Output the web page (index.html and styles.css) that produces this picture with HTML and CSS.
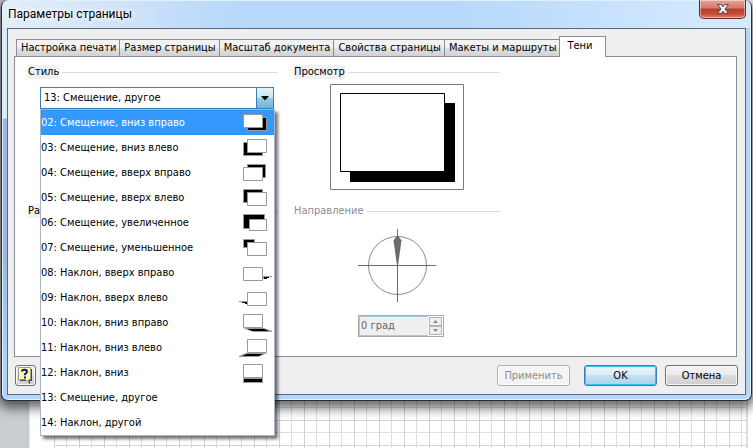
FILE: index.html
```html
<!DOCTYPE html>
<html lang="ru">
<head>
<meta charset="utf-8">
<title>Параметры страницы</title>
<link rel="stylesheet" href="styles.css">
</head>
<body>
<main class="dialog">
  <header class="titlebar">
    <h1 class="title">Параметры страницы</h1>
    <button class="close" type="button" aria-label="Закрыть">
      <svg width="14" height="12" viewBox="0 0 14 12"><path d="M1.5 1.5h3.6L7 3.8l1.9-2.3h3.6L9 6l3.5 4.5H8.9L7 8.2l-1.9 2.3H1.5L5 6z" fill="#f4f4f4" stroke="#4b4a55"/></svg>
    </button>
  </header>
  <div class="client">
    <nav class="tabs" role="tablist">
      <button class="tab" type="button" role="tab">Настройка печати</button>
      <button class="tab" type="button" role="tab">Размер страницы</button>
      <button class="tab" type="button" role="tab">Масштаб документа</button>
      <button class="tab" type="button" role="tab">Свойства страницы</button>
      <button class="tab" type="button" role="tab">Макеты и маршруты</button>
      <button class="tab tab-active" type="button" role="tab" aria-selected="true">Тени</button>
    </nav>
    <section class="panel">
      <div class="group">
        <div class="legend"><label class="legend-text" for="style">Стиль</label></div>
        <div class="combo">
          <select class="combo-select" id="style"><option>13: Смещение, другое</option></select>
          <span class="combo-arrow"><svg width="8" height="5" viewBox="0 0 8 5"><path d="M0 0h8L4 4.5z"/></svg></span>
          <ul class="menu" role="listbox" aria-labelledby="style">
            <li class="item item-selected" role="option" aria-selected="true">02: Смещение, вниз вправо
              <svg class="icon" viewBox="0 0 36 25"><path class="shade" d="M9.5 7.5h19v13h-19z"/><path class="sheet" d="M5.5 4.5h19v13h-19z"/></svg></li>
            <li class="item" role="option">03: Смещение, вниз влево
              <svg class="icon" viewBox="0 0 36 25"><path class="shade" d="M5.5 7.5h19v13h-19z"/><path class="sheet" d="M9.5 4.5h19v13h-19z"/></svg></li>
            <li class="item" role="option">04: Смещение, вверх вправо
              <svg class="icon" viewBox="0 0 36 25"><path class="shade" d="M9.5 4.5h18v13h-18z"/><path class="sheet" d="M5.5 7.5h19v13h-19z"/></svg></li>
            <li class="item" role="option">05: Смещение, вверх влево
              <svg class="icon" viewBox="0 0 36 25"><path class="shade" d="M5.5 4.5h19v13h-19z"/><path class="sheet" d="M9.5 7.5h19v13h-19z"/></svg></li>
            <li class="item" role="option">06: Смещение, увеличенное
              <svg class="icon" viewBox="0 0 36 25"><path class="shade" d="M5.5 4.5h21v14h-21z"/><path class="sheet" d="M11.5 9.5h17v11h-17z"/></svg></li>
            <li class="item" role="option">07: Смещение, уменьшенное
              <svg class="icon" viewBox="0 0 36 25"><path class="shade" d="M5.5 4.5h11v8h-11z"/><path class="sheet" d="M9.5 7.5h19v13h-19z"/></svg></li>
            <li class="item" role="option">08: Наклон, вверх вправо
              <svg class="icon" viewBox="0 0 36 25"><path d="M25 16h9v1h-3v1h-3v1h-3z" fill="#999"/><path d="M26 17h5v1h-2v1h-3z"/><path class="sheet" d="M5.5 7.5h19v13h-19z"/></svg></li>
            <li class="item" role="option">09: Наклон, вверх влево
              <svg class="icon" viewBox="0 0 36 25"><path d="M1 16h8v3H7v-1H4v-1H1z" fill="#999"/><path d="M4 17h5v2H7v-1H4z"/><path class="sheet" d="M9.5 7.5h19v13h-19z"/></svg></li>
            <li class="item" role="option">10: Наклон, вниз вправо
              <svg class="icon" viewBox="0 0 36 25"><path d="M5 18h21l8 3v1H16z" fill="#999"/><path d="M9 19h17l5 2H14z"/><path class="sheet" d="M5.5 4.5h19v13h-19z"/></svg></li>
            <li class="item" role="option">11: Наклон, вниз влево
              <svg class="icon" viewBox="0 0 36 25"><path d="M29 18H8l-7 3v1h19z" fill="#999"/><path d="M25 19H9l-5 2h17z"/><path class="sheet" d="M9.5 4.5h19v13h-19z"/></svg></li>
            <li class="item" role="option">12: Наклон, вниз
              <svg class="icon" viewBox="0 0 36 25"><path d="M5 17h20v6H5z" fill="#999"/><path d="M6 19h18v3H6z"/><path class="sheet" d="M5.5 4.5h19v13h-19z"/></svg></li>
            <li class="item" role="option">13: Смещение, другое</li>
            <li class="item" role="option">14: Наклон, другой</li>
          </ul>
        </div>
      </div>
      <div class="group">
        <div class="legend"><span class="legend-text">Просмотр</span></div>
        <svg class="preview" width="134" height="106" viewBox="0 0 134 106">
          <path d="M.5.5h133v105H.5z" fill="#fff" stroke="#7b7b7b"/>
          <path d="M20 19h105v79H20z"/>
          <path d="M10.5 9.5h104v78h-104z" fill="#fff" stroke="#000"/>
        </svg>
      </div>
      <div class="group">
        <div class="legend"><span class="legend-text">Ра</span></div>
      </div>
      <div class="group group-disabled">
        <div class="legend"><label class="legend-text" for="angle">Направление</label></div>
        <svg class="compass" width="78" height="73" viewBox="0 0 78 73">
          <circle cx="39.5" cy="36.5" r="29" fill="none" stroke="#8a8a8a"/>
          <path d="M39.5 0v73M0 36.5h78" stroke="#6c6c6c"/>
          <path d="M39.5 6l-4 5.5 3.5 25h1l3.5-25z" fill="#6c6c6c"/>
        </svg>
        <div class="spinner">
          <input class="spinner-input" id="angle" type="text" value="0 град" disabled>
          <div class="spinner-buttons">
            <button class="step" type="button" disabled aria-label="Больше"><svg width="5" height="3" viewBox="0 0 5 3"><path d="M0 3h5L2.5 0z" fill="#8a8a8a"/></svg></button>
            <button class="step" type="button" disabled aria-label="Меньше"><svg width="5" height="3" viewBox="0 0 5 3"><path d="M0 0h5L2.5 3z" fill="#8a8a8a"/></svg></button>
          </div>
        </div>
      </div>
    </section>
    <footer class="actions">
      <button class="btn btn-help" type="button" aria-label="Справка">
        <svg width="15" height="17" viewBox="0 0 15 17"><path d="M2 2h12v12h-2v3l-3-3H2z" fill="#444"/><path d="M.5.5h12v12h-2v3l-3-3h-7z" fill="#ffffa0" stroke="#999"/><path d="M4 4.5C4 2.2 9 2.2 9 4.5 9 6.3 6.8 6.3 6.8 8.3" fill="none" stroke="#10108c" stroke-width="2"/><path d="M6 9.5h2v2H6z" fill="#10108c"/></svg>
      </button>
      <button class="btn btn-apply" type="button" disabled>Применить</button>
      <button class="btn btn-ok" type="button">OK</button>
      <button class="btn" type="button">Отмена</button>
    </footer>
  </div>
</main>
</body>
</html>
```
FILE: styles.css
```css
* {
  box-sizing: border-box;
}

body {
  margin: 0;
  min-height: 100vh;
  overflow: hidden;
  font: 11px/14px "DejaVu Sans Condensed", "DejaVu Sans", sans-serif;
  color: #000;
  background:
    linear-gradient(to right, #c9ccd0 0 29px, #e4e6e8 29px 30px, #fff 30px 54px, transparent 54px),
    linear-gradient(to left, #fff 0 5px, #ddd 5px 7px, transparent 7px),
    linear-gradient(to right, #d2d2d2 0 1px, transparent 1px 12px, #dedede 12px 13px, transparent 13px) 54px 0 / 25px 100%,
    linear-gradient(to bottom, #d2d2d2 0 1px, transparent 1px 12px, #dedede 12px 13px, transparent 13px) 0 420px / 100% 25px,
    #fff;
}

button,
input,
select {
  font: inherit;
  color: inherit;
  margin: 0;
  padding: 0;
}

.dialog {
  margin: 0 1px;
  padding: 0 5px 5px;
  border: 1px solid #26303c;
  border-top: 0;
  border-radius: 7px;
  background:
    linear-gradient(to right, #e4eef8 0, #cfe3f8 120px, #b5d8fb 240px, #b5d8fb 60%, #cbe4fd 85%, #d6eafd 100%) 0 0 / 100% 28px no-repeat,
    linear-gradient(to bottom, #dce9f6 0 118px, #9bb8dc 119px 250px, #b2d3f8 370px) 0 0 / 6px 100% no-repeat,
    #b4d6fb;
  box-shadow: inset 0 0 0 1px #e2f0fd, 0 4px 12px 3px rgba(0, 0, 0, 0.6);
}

.titlebar {
  display: flex;
  justify-content: space-between;
  align-items: flex-start;
  height: 28px;
  padding-left: 1px;
}

.title {
  margin: 6px 0 0;
  font: 12px/16px Roboto, "Noto Sans", sans-serif;
  text-shadow: 0 0 6px #fff, 0 0 6px #fff;
}

.close {
  display: flex;
  justify-content: center;
  align-items: center;
  width: 47px;
  height: 19px;
  border: 1px solid #5d2a33;
  border-top: 0;
  border-radius: 0 0 5px 5px;
  background: linear-gradient(#e3a59b 0, #d5796c 45%, #b93a2a 50%, #c9513c 80%, #dd8468 100%);
  box-shadow: inset 0 0 0 1px rgba(255, 255, 255, 0.45);
}

.client {
  padding: 7px 7px 8px 6px;
  border: 1px solid #5b6879;
  background: #efefef;
}

.tabs {
  position: relative;
  z-index: 1;
  display: flex;
  align-items: flex-end;
  padding-left: 2px;
  margin-bottom: -1px;
}

.tab {
  height: 18px;
  padding: 0 3px 0 4px;
  border: 1px solid #8b8c95;
  margin-right: -1px;
  background: linear-gradient(#f2f2f2 0 45%, #e0e0e0 55%, #d2d2d2);
  line-height: 16px;
  white-space: nowrap;
}

.tab-active {
  height: 21px;
  padding: 0 12px 2px 7px;
  border-bottom: 0;
  background: #fff;
}

.panel {
  display: grid;
  grid-template-columns: 250px 206px;
  gap: 14px 16px;
  margin-right: 1px;
  padding: 8px 13px 19px;
  border: 1px solid #8b8c95;
  background: #fff;
}

.legend {
  display: flex;
  align-items: center;
  gap: 3px;
}

.legend-text {
  background: #f1f1f1;
}

.legend::after {
  content: "";
  flex: 1;
  height: 1px;
  background: #d5dfe5;
}

.group-disabled .legend-text {
  color: #8e8e8e;
  background: none;
}

.combo {
  position: relative;
  display: flex;
  width: 234px;
  height: 22px;
  margin: 8px 0 0 12px;
  border: 1px solid #3c7fb1;
  background: #fff;
}

.combo-select {
  flex: 1;
  padding-left: 3px;
  border: 0;
  appearance: none;
  background: transparent;
}

.combo-arrow {
  display: flex;
  justify-content: center;
  align-items: center;
  width: 17px;
  border-left: 1px solid #3c7fb1;
  background: linear-gradient(#e4f3fb 0, #c5e4f5 50%, #98cde8 50%, #74b4d5 100%);
}

.menu {
  position: absolute;
  z-index: 2;
  top: 21px;
  left: -1px;
  width: 235px;
  margin: 0;
  padding: 0;
  border: 1px solid #a9b4c6;
  border-top-color: #8fc0e0;
  background: #fff;
  box-shadow: 3px 3px 3px rgba(0, 0, 0, 0.55);
  list-style: none;
}

.item {
  display: flex;
  justify-content: space-between;
  align-items: center;
  height: 25px;
  white-space: nowrap;
}

.item-selected {
  color: #fff;
  background: #3399ff;
  outline: 1px dotted #c66a1a;
  outline-offset: -1px;
}

.icon {
  width: 36px;
  height: 25px;
}

.shade {
  fill: #000;
  stroke: #999;
}

.sheet {
  fill: #fff;
  stroke: #999;
}

.preview {
  display: block;
  margin: 5px 0 0 36px;
}

.compass {
  display: block;
  margin: 11px 0 0 64px;
}

.spinner {
  display: flex;
  width: 86px;
  height: 22px;
  margin: 13px 0 0 64px;
  border: 1px solid #a9a9a9;
  background: #efefef;
}

.spinner-input {
  flex: 1;
  min-width: 0;
  padding: 0 1px;
  border: 1px solid #a9c8ea;
  border-right: 0;
  background: #efefef;
  color: #666;
}

.spinner-buttons {
  display: flex;
  flex-direction: column;
  width: 15px;
  padding: 1px;
  background: #fff;
}

.step {
  display: flex;
  flex: 1;
  justify-content: center;
  align-items: center;
  border: 1px solid #b4b4b4;
  background: #efefef;
}

.actions {
  display: flex;
  gap: 8px;
  margin-top: 8px;
  padding-left: 1px;
}

.btn {
  width: 73px;
  height: 21px;
  border: 1px solid #707070;
  border-radius: 3px;
  background: linear-gradient(#f3f3f3 0, #ebebeb 50%, #dcdcdc 50%, #cfcfcf 100%);
  box-shadow: inset 0 0 0 1px #fafafa;
}

.btn-help {
  display: flex;
  justify-content: center;
  align-items: center;
  width: 21px;
  margin-right: auto;
}

.btn-apply {
  margin-right: 6px;
  border-color: #adb2b5;
  background: #f4f4f4;
  color: #8c8c8c;
}

.btn-ok {
  border-color: #3c7fb1;
  background: linear-gradient(#eaf4fa 0, #d9eef8 50%, #c2e2f2 50%, #a9d3e8 100%);
  box-shadow: inset 0 0 0 1px #2fc4f3;
}
```
